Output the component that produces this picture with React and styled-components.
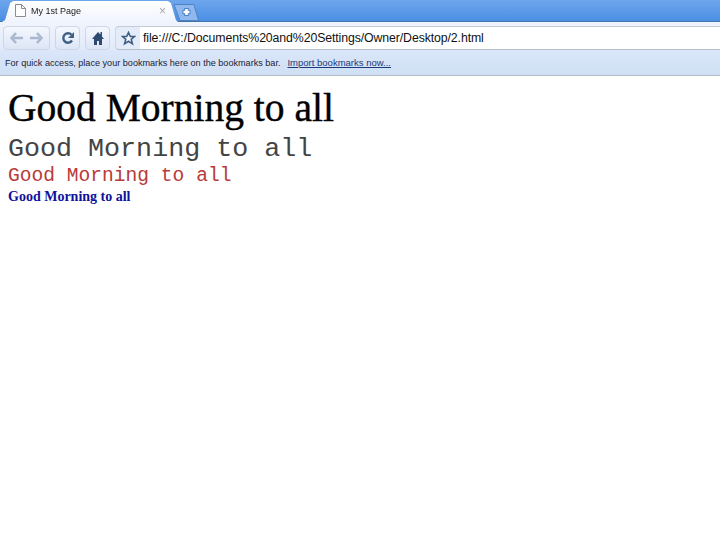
import styled, { createGlobalStyle } from "styled-components";

const Global = createGlobalStyle`
  html, body { margin: 0; padding: 0; background: #fff; }
  #root { width: 720px; height: 540px; overflow: hidden; }
`;

const Browser = styled.div`
  width: 720px;
  height: 540px;
  display: flex;
  flex-direction: column;
  background: #fff;
`;

const TabStrip = styled.div`
  height: 22px;
  box-sizing: border-box;
  display: flex;
  align-items: flex-end;
  padding-left: 2px;
  background: linear-gradient(#6ea6ee, #4a8fe3);
  border-bottom: 1px solid #3f75a8;
`;

const TabEdge = styled.div`
  margin-bottom: -1px;
  position: relative;
  z-index: 1;
  filter: drop-shadow(0 0 0.6px #35608f);
`;

const Tab = styled.div`
  width: 176px;
  height: 21px;
  display: flex;
  align-items: center;
  gap: 5px;
  padding: 0 12px 2px 13px;
  box-sizing: border-box;
  background: linear-gradient(#ffffff, #f0f4fd);
  clip-path: polygon(0 100%, 3px 90%, 8px 10%, 11px 0, 166px 0, 169px 10%, 174px 90%, 176px 100%);
  font: 9px "Liberation Sans", sans-serif;
  color: #222;
`;

const TabTitle = styled.span`
  flex: 1;
`;

const Close = styled.span`
  color: #a9a9a9;
  font-size: 12px;
`;

const NewTab = styled.svg`
  width: 26px;
  height: 17px;
  margin-left: -5px;
  flex: none;
`;

const Toolbar = styled.div`
  height: 28px;
  box-sizing: border-box;
  display: flex;
  gap: 5px;
  padding: 4px 0 0 3px;
  background: linear-gradient(#f0f4fd, #e2eafa);
`;

const Btn = styled.div`
  width: ${(p) => p.$w}px;
  height: 24px;
  display: flex;
  align-items: center;
  justify-content: space-evenly;
  box-sizing: border-box;
  border: 1px solid #ccd6e8;
  border-radius: 4px;
  background: linear-gradient(#f4f7fd, #dde6f6);
`;

const Omni = styled.div`
  flex: 1;
  height: 24px;
  display: flex;
  align-items: center;
  box-sizing: border-box;
  border-top: 1px solid #c4ccd8;
  border-bottom: 1px solid #b4c0cc;
  border-left: 1px solid #ccd6e8;
  border-radius: 4px 0 0 4px;
  background: linear-gradient(90deg, #e4ebf9 24px, #fff 24px);
`;

const StarBox = styled.div`
  width: 24px;
  display: flex;
  justify-content: center;
`;

const Url = styled.span`
  padding-left: 3px;
  font: 12.3px "Liberation Sans", sans-serif;
  color: #111;
  letter-spacing: -0.1px;
`;

const BookmarkBar = styled.div`
  height: 26px;
  box-sizing: border-box;
  display: flex;
  align-items: center;
  gap: 7px;
  padding-left: 5px;
  background: linear-gradient(#dbe6f9, #cfe0f4);
  border-bottom: 1px solid #b2bcc4;
  font: 9.1px "Liberation Sans", sans-serif;
  color: #223;
`;

const ImportLink = styled.a`
  font-size: 9.5px;
  color: #1a3a7a;
  text-decoration: underline;
`;

const Page = styled.main`
  flex: 1;
  padding: 6px 8px;
`;

const Line = styled.div`
  font-family: ${(p) => (p.$mono ? '"Liberation Mono"' : '"Liberation Serif"')}, serif;
  font-size: ${(p) => p.$size}px;
  font-weight: ${(p) => (p.$bold ? 700 : 400)};
  line-height: ${(p) => p.$lh}px;
  color: ${(p) => p.$color};
  white-space: nowrap;
`;

const BigLine = styled(Line)`
  -webkit-text-stroke: 0.4px #000;
`;

export default function App() {
  return (
    <>
      <Global />
      <Browser>
        <TabStrip>
          <TabEdge>
            <Tab>
              <svg width="11" height="13" viewBox="0 0 11 13">
                <path d="M.5 .5h6l4 4v8h-10z M6.500 .5v4h4" fill="#fff" stroke="#8c8c8c" />
              </svg>
              <TabTitle>My 1st Page</TabTitle>
              <Close>×</Close>
            </Tab>
          </TabEdge>
          <NewTab viewBox="0 0 26 17">
            <path d="M1 .5H21L25.500 16.500H7z" fill="#8fb8ee" stroke="#4f82c4" />
            <path d="M13.500 4v8M9.500 8h8" stroke="#4f82c4" strokeWidth="4.600" />
            <path d="M13.500 5v6M10.500 8h6" stroke="#fff" strokeWidth="2.600" />
          </NewTab>
        </TabStrip>
        <Toolbar>
          <Btn $w={47}>
            <svg width="14" height="12" viewBox="0 0 14 12">
              <path d="M6 1L1.500 6L6 11M2 6h11" fill="none" stroke="#a9b9cf" strokeWidth="2.600" />
            </svg>
            <svg width="14" height="12" viewBox="0 0 14 12">
              <path d="M8 1l4.500 5L8 11M12 6H1" fill="none" stroke="#a9b9cf" strokeWidth="2.600" />
            </svg>
          </Btn>
          <Btn $w={25}>
            <svg width="14" height="14" viewBox="0 0 14 14">
              <path d="M11 9.500A4.700 4.700 0 1 1 10.500 3.800" fill="none" stroke="#3f5f85" strokeWidth="2.400" />
              <path d="M13 1v6H7z" fill="#3f5f85" />
            </svg>
          </Btn>
          <Btn $w={25}>
            <svg width="14" height="15" viewBox="0 0 14 15">
              <path d="M7 1L1 8h2v6h3V10h2v4h3V8h2l-2-2.500V1H9.500v2.500z" fill="#2e4a70" />
            </svg>
          </Btn>
          <Omni>
            <StarBox>
              <svg width="15" height="15" viewBox="0 0 15 15">
                <path d="M7.500 1.500l1.800 4h4.200l-3.300 2.800 1.200 4.500-3.900-2.500-3.900 2.500 1.200-4.500L1.500 5.500h4.200z" fill="#f4f7fd" stroke="#3f5f85" strokeWidth="1.600" />
              </svg>
            </StarBox>
            <Url>file:///C:/Documents%20and%20Settings/Owner/Desktop/2.html</Url>
          </Omni>
        </Toolbar>
        <BookmarkBar>
          <span>For quick access, place your bookmarks here on the bookmarks bar.</span>
          <ImportLink>Import bookmarks now...</ImportLink>
        </BookmarkBar>
        <Page>
          <BigLine $size={39.5} $lh={52} $color="#000">Good Morning to all</BigLine>
          <Line $mono $size={26.7} $lh={30} $color="#444">Good Morning to all</Line>
          <Line $mono $size={19.6} $lh={24} $color="#b83a3a">Good Morning to all</Line>
          <Line $bold $size={14} $lh={18} $color="#10109a">Good Morning to all</Line>
        </Page>
      </Browser>
    </>
  );
}
